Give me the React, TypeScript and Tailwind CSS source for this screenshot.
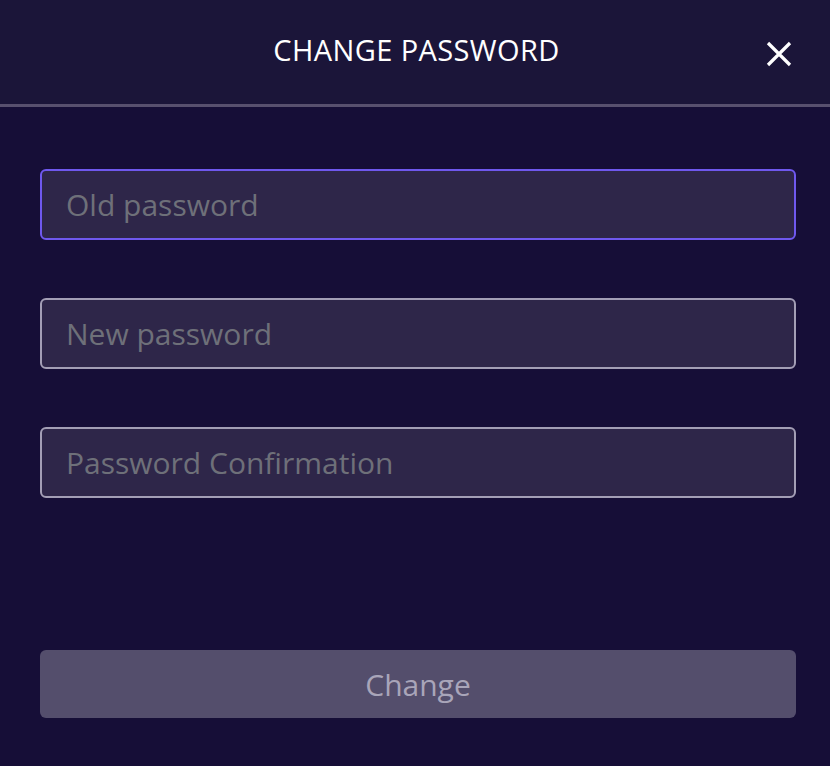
const font = { fontFamily: '"Open Sans", "Noto Sans", sans-serif' };

function Field({ placeholder, focused }: { placeholder: string; focused?: boolean }) {
  return (
    <input
      type="password"
      placeholder={placeholder}
      className={`w-full h-[71px] rounded-[6px] border-2 bg-[#2e2649] px-[24px] text-[30px] text-white placeholder:text-[#6e7079] outline-none ${
        focused ? "border-[#6f58ee]" : "border-[#a39eb5]"
      }`}
    />
  );
}

export default function App() {
  return (
    <div className="w-[830px] h-[766px] bg-[#160e37] flex flex-col" style={font}>
      {/* Header */}
      <div className="h-[104px] bg-[#1b1539] relative flex items-center justify-center shrink-0">
        <h1 className="text-[29px] text-white tracking-[0.4px] pl-[3px] pb-[4px]">CHANGE PASSWORD</h1>
        <button className="absolute right-[38px] top-[41px] text-white">
          <svg width="26" height="26" viewBox="0 0 26 26" fill="none" stroke="currentColor" strokeWidth="3.2">
            <path d="M2 2L24 24M24 2L2 24" />
          </svg>
        </button>
      </div>
      <div className="h-[3px] bg-[#58506e] shrink-0" />

      {/* Form */}
      <div className="flex-1 flex flex-col pl-[40px] pr-[34px] pt-[62px] pb-[48px]">
        <div className="flex flex-col gap-[58px]">
          <Field placeholder="Old password" focused />
          <Field placeholder="New password" />
          <Field placeholder="Password Confirmation" />
        </div>
        <button className="mt-auto h-[68px] w-full rounded-[6px] bg-[#544e6c] text-[30px] text-[#a9a5b9]">
          Change
        </button>
      </div>
    </div>
  );
}
